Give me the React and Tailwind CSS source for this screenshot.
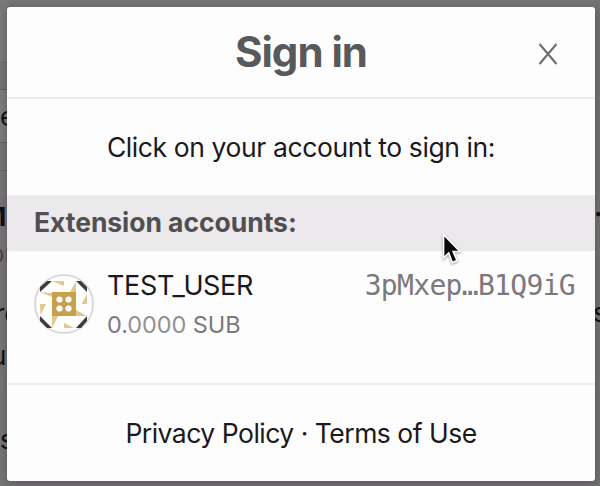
function Avatar() {
  return (
    <svg viewBox="0 0 60 60" className="h-[60px] w-[60px] shrink-0">
      <circle cx="30" cy="30" r="29" fill="#fff" stroke="#d3d1d4" strokeWidth="1.6" />
      <g fill="#3d3b40">
        <path d="M6 13V18L18 7H13Z" />
        <path d="M42 7H47L53 13V18Z" />
        <path d="M6 42V47L13 54H18Z" />
        <path d="M53 42V47L47 54H42Z" />
      </g>
      <g fill="#e0c891">
        <path d="M18 7H30V12Z" />
        <path d="M53 20V30H47.500Z" />
        <path d="M6 30H12L6.500 41Z" />
        <path d="M30 49L40 54H30Z" />
        <path d="M6 18L18 19V23Z" />
        <path d="M36 18L42 7V18Z" />
        <path d="M42 36L53 42L42 42Z" />
        <path d="M18 42H24L18 54Z" />
      </g>
      <path d="M18 18H42V42H18Z" fill="#c6a04a" />
      <g fill="#fff">
        <circle cx="25.500" cy="25.500" r="3.100" />
        <circle cx="34.500" cy="25.500" r="3.100" />
        <circle cx="25.500" cy="34.500" r="3.100" />
        <circle cx="34.500" cy="34.500" r="3.100" />
      </g>
    </svg>
  );
}

function Page() {
  return (
    <div className="flex h-full justify-between bg-[#757375] text-[26px] leading-[40px] text-[#111]">
      <div className="flex w-[7px] flex-col overflow-hidden whitespace-nowrap">
        <div className="h-[63px] border-b border-[#6d6b6d] bg-[#7a787a]" />
        <div className="h-[27px] border-b border-[#5f5d5f]" />
        <div className="h-[53px] border-b border-[#626062] bg-[#7c7a7c] pt-[7px]">e</div>
        <div className="h-[28px] border-b border-[#626062]" />
        <div className="-ml-[18px] mt-[26px] h-[40px] font-bold">M</div>
        <div className="-ml-[11px] -mt-[3px] h-[40px] text-[#4a484a]">on</div>
        <div className="-ml-[5px] mt-[20px] h-[40px]">re</div>
        <div className="-ml-[9px] mt-[2px] h-[40px]">u</div>
        <div className="mt-[44px] h-[40px]">s</div>
      </div>
      <div className="flex w-[6px] flex-col overflow-hidden whitespace-nowrap bg-[#717171]">
        <div className="mt-[194px] h-[40px] font-bold">·</div>
        <div className="-ml-[1px] mt-[59px] h-[40px]">s</div>
      </div>
    </div>
  );
}

function Pointer() {
  return (
    <svg viewBox="0 0 24 34" className="absolute left-[441px] top-[232px] h-[34px] w-[24px] drop-shadow-[0_1px_1px_rgba(0,0,0,0.4)]">
      <path d="M2.500 2.500V26L7.700 21L11.200 30.500L16 28.500L12.200 19.500H19Z" fill="#080808" stroke="#fff" strokeWidth="1.700" />
    </svg>
  );
}

export default function App() {
  return (
    <div className="relative h-[486px] w-[600px] overflow-hidden font-['Inter','Liberation_Sans',sans-serif]">
      <Page />
      <div className="absolute left-[7px] top-[7px] flex h-[474px] w-[588px] flex-col overflow-hidden rounded-[3px] bg-[#fefdfe] text-[#1b191c] shadow-[0_2px_8px_rgba(0,0,0,0.25)]">
        <header className="grid h-[92px] shrink-0 grid-cols-[1fr_auto_1fr] items-center border-b-2 border-[#ecebed]">
          <span />
          <h1 className="text-[42px] font-bold leading-[50px] tracking-[-1px] text-[#59585b]">Sign in</h1>
          <button className="mr-[37px] mt-1 justify-self-end" aria-label="Close">
            <svg viewBox="0 0 20 22" className="h-[22px] w-5" fill="none" stroke="#727174" strokeWidth="2.300">
              <path d="M1.500 1L18.500 21M18.500 1L1.500 21" />
            </svg>
          </button>
        </header>
        <p className="flex h-[96px] shrink-0 items-center justify-center pt-px text-[26.500px] tracking-[-0.400px]">Click on your account to sign in:</p>
        <h2 className="flex h-[56px] shrink-0 items-center bg-[#ebe9eb] pl-[27px] text-[26.500px] font-bold tracking-[-0.050px] text-[#504f52]">Extension accounts:</h2>
        <div className="flex h-[132px] shrink-0 pl-[27px] pr-5 pt-[15px]">
          <div className="pt-[8px]"><Avatar /></div>
          <div className="ml-[13px] flex-1">
            <div className="flex h-[40px] items-center justify-between">
              <span className="text-[27px] tracking-[-0.350px]">TEST_USER</span>
              <span className="font-['DejaVu_Sans_Mono',monospace] text-[28px] tracking-[-0.680px] text-[#7b797c]">3pMxep…B1Q9iG</span>
            </div>
            <div className="flex h-[38px] items-center text-[23.500px] tracking-[-0.080px] text-[#7b797c]">
              <span>0.<span className="text-[#929093]">0000</span> SUB</span>
            </div>
          </div>
        </div>
        <footer className="flex flex-1 items-center justify-center border-t-2 border-[#ecebed] pt-px text-[26.500px] tracking-[-0.500px]">Privacy Policy · Terms of Use</footer>
      </div>
      <Pointer />
    </div>
  );
}
